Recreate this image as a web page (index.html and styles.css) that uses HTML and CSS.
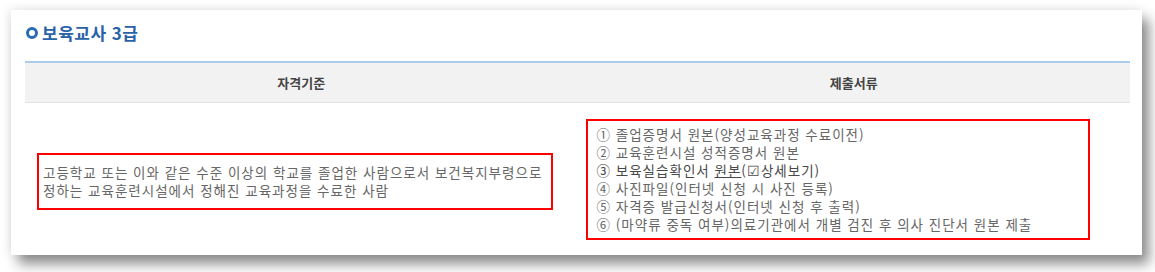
FILE: index.html
```html
<!DOCTYPE html>
<html lang="ko">
<head>
<meta charset="utf-8">
<link rel="stylesheet" href="styles.css">
</head>
<body>
<div class="card">
  <h2 class="title"><span class="dot"></span>보육교사 3급</h2>
  <div class="table">
    <div class="thead">
      <div class="th">자격기준</div>
      <div class="th">제출서류</div>
    </div>
    <div class="tbody">
      <div class="td td-left">
        <div class="box box-left">고등학교 또는 이와 같은 수준 이상의 학교를 졸업한 사람으로서 보건복지부령으로<br>정하는 교육훈련시설에서 정해진 교육과정을 수료한 사람</div>
      </div>
      <div class="td td-right">
        <div class="box box-right">
          <div class="line">① 졸업증명서 원본(양성교육과정 수료이전)</div>
          <div class="line">② 교육훈련시설 성적증명서 원본</div>
          <div class="line dark">③ 보육실습확인서 <span class="u">원본</span>(☑상세보기)</div>
          <div class="line">④ 사진파일(인터넷 신청 시 사진 등록)</div>
          <div class="line">⑤ 자격증 발급신청서(인터넷 신청 후 출력)</div>
          <div class="line">⑥ (마약류 중독 여부)의료기관에서 개별 검진 후 의사 진단서 원본 제출</div>
        </div>
      </div>
    </div>
  </div>
</div>
</body>
</html>
```

FILE: styles.css
```css
html, body {
  margin: 0;
  padding: 0;
  background: #ffffff;
}
body {
  font-family: "Noto Sans CJK KR", "Noto Sans", sans-serif;
  width: 1155px;
  height: 272px;
  overflow: hidden;
}
.card {
  box-sizing: border-box;
  margin: 10px 0 0 11px;
  width: 1131px;
  height: 245px;
  background: #ffffff;
  padding: 11px 12px 0 14px;
  box-shadow: 7px 9px 12px rgba(0, 0, 0, 0.45), -2px -2px 10px rgba(0, 0, 0, 0.08);
  overflow: hidden;
}
.title {
  margin: 0 0 16px 0;
  height: 24px;
  display: flex;
  align-items: center;
  font-size: 17px;
  letter-spacing: 0.5px;
  font-weight: bold;
  color: #2a62a8;
  line-height: 24px;
}
.dot {
  box-sizing: border-box;
  width: 12px;
  height: 12px;
  border: 3px solid #2b6bb3;
  border-radius: 50%;
  margin: 0 4px 0 1px;
}
.table {
  border-top: 2px solid #abcbea;
}
.thead {
  display: grid;
  grid-template-columns: 1fr 1fr;
  background: #f2f2f2;
  border-bottom: 1px solid #e2e2e2;
  height: 39px;
}
.th {
  display: flex;
  align-items: center;
  justify-content: center;
  font-size: 13px;
  font-weight: bold;
  color: #444444;
}
.tbody {
  display: grid;
  grid-template-columns: 1fr 1fr;
  padding: 16px 0 12px 0;
}
.td {
  display: flex;
  align-items: center;
}
.td-left {
  padding-left: 12px;
}
.td-right {
  padding-left: 8px;
}
.box {
  box-sizing: border-box;
  border: 2px solid #ff0000;
  font-size: 13.5px;
  letter-spacing: 1px;
  color: #666666;
  white-space: nowrap;
}
.box-left {
  width: 516px;
  height: 57px;
  margin-top: 4px;
  padding: 8px 0 0 4px;
  line-height: 18px;
}
.box-right {
  width: 504px;
  height: 121px;
  padding: 4px 0 0 9px;
  line-height: 18px;
}
.line.dark {
  color: #484848;
}
.u {
  text-decoration: underline;
}
```
